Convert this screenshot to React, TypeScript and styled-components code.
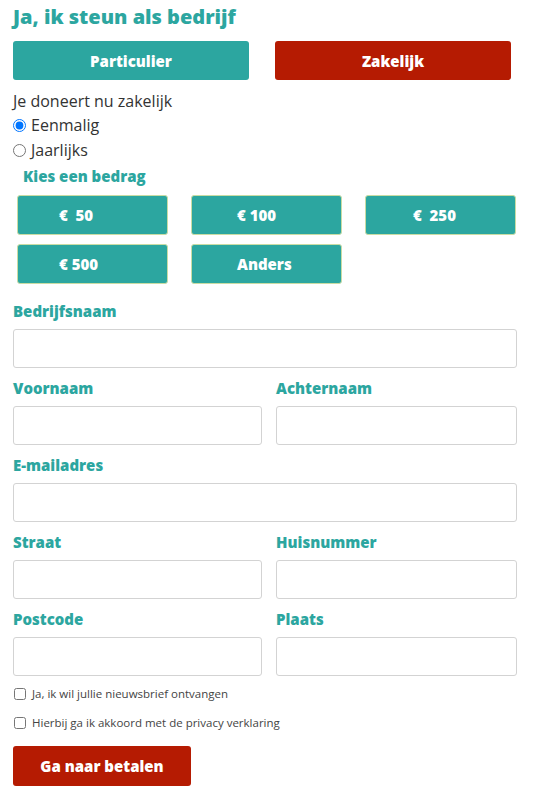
import styled, { createGlobalStyle } from "styled-components";
import { useState } from "react";

const GlobalStyle = createGlobalStyle`
  body {
    margin: 0;
    background: #ffffff;
    font-family: "Open Sans", "Liberation Sans", sans-serif;
    color: #333333;
  }
  * {
    box-sizing: border-box;
  }
`;

const teal = "#2ca6a0";
const red = "#b51b02";
const heading = `"Open Sans", Lato, sans-serif`;

const Page = styled.div`
  width: 535px;
  padding: 4px 18px 14px 13px;
`;

const Title = styled.h1`
  margin: 0;
  font-family: ${heading};
  font-weight: 800;
  font-size: 20px;
  line-height: 26px;
  color: ${teal};
`;

const TypeRow = styled.div`
  display: grid;
  grid-template-columns: 236px 236px;
  gap: 26px;
  margin-top: 11px;
`;

const BigButton = styled.button<{ $active?: boolean }>`
  height: 39px;
  border: none;
  border-radius: 3px;
  background: ${(p) => (p.$active ? red : teal)};
  color: #ffffff;
  font-family: ${heading};
  font-weight: 800;
  font-size: 15px;
  cursor: pointer;
`;

const Intro = styled.p`
  margin: 9px 0 0;
  font-size: 16px;
  line-height: 24px;
`;

const RadioRow = styled.label`
  display: flex;
  align-items: center;
  gap: 5px;
  font-size: 16px;
  line-height: 25px;
  input {
    margin: 0;
    width: 13px;
    height: 13px;
  }
`;

const SubTitle = styled.h2`
  margin: 2px 0 0 10px;
  font-family: ${heading};
  font-weight: 800;
  font-size: 15px;
  line-height: 22px;
  color: ${teal};
`;

const AmountGrid = styled.div`
  display: grid;
  grid-template-columns: repeat(3, 151px);
  column-gap: 23px;
  row-gap: 9px;
  margin: 8px 0 0 4px;
`;

const AmountButton = styled.button<{ $pad: number }>`
  height: 40px;
  border: 1px solid #c9dca4;
  border-radius: 3px;
  background: ${teal};
  color: #ffffff;
  text-align: left;
  padding: 0 0 0 ${(p) => p.$pad}px;
  font-family: ${heading};
  font-weight: 800;
  font-size: 15px;
  white-space: pre;
  cursor: pointer;
`;

const Form = styled.div`
  display: grid;
  grid-template-columns: 249px 1fr;
  column-gap: 14px;
  row-gap: 10px;
  margin-top: 17px;
`;

const Field = styled.div<{ $wide?: boolean }>`
  display: flex;
  flex-direction: column;
  grid-column: ${(p) => (p.$wide ? "1 / -1" : "auto")};
`;

const Label = styled.label`
  font-family: ${heading};
  font-weight: 800;
  font-size: 15px;
  line-height: 20px;
  color: ${teal};
  margin-bottom: 8px;
`;

const Input = styled.input`
  height: 39px;
  width: 100%;
  border: 1px solid #d3d3d3;
  border-radius: 3px;
  padding: 0 10px;
  font-size: 15px;
`;

const Checks = styled.div`
  display: flex;
  flex-direction: column;
  gap: 12px;
  margin-top: 9px;
`;

const CheckRow = styled.label`
  display: flex;
  align-items: center;
  gap: 6px;
  font-size: 11.5px;
  line-height: 17px;
  color: #444444;
  input {
    margin: 0 0 0 1px;
    width: 12px;
    height: 12px;
  }
`;

const Submit = styled.button`
  margin-top: 15px;
  width: 178px;
  height: 40px;
  border: none;
  border-radius: 3px;
  background: ${red};
  color: #ffffff;
  font-family: ${heading};
  font-weight: 800;
  font-size: 15px;
  cursor: pointer;
`;

const amounts = [
  { label: "€  50", pad: 41 },
  { label: "€ 100", pad: 45 },
  { label: "€  250", pad: 47 },
  { label: "€ 500", pad: 41 },
  { label: "Anders", pad: 45 },
];

const App = () => {
  const [freq, setFreq] = useState("once");

  return (
    <Page>
      <GlobalStyle />
      <Title>Ja, ik steun als bedrijf</Title>
      <TypeRow>
        <BigButton>Particulier</BigButton>
        <BigButton $active>Zakelijk</BigButton>
      </TypeRow>
      <Intro>Je doneert nu zakelijk</Intro>
      <RadioRow>
        <input
          type="radio"
          name="freq"
          checked={freq === "once"}
          onChange={() => setFreq("once")}
        />
        Eenmalig
      </RadioRow>
      <RadioRow>
        <input
          type="radio"
          name="freq"
          checked={freq === "year"}
          onChange={() => setFreq("year")}
        />
        Jaarlijks
      </RadioRow>
      <SubTitle>Kies een bedrag</SubTitle>
      <AmountGrid>
        {amounts.map((a) => (
          <AmountButton key={a.label} $pad={a.pad}>
            {a.label}
          </AmountButton>
        ))}
      </AmountGrid>
      <Form>
        <Field $wide>
          <Label>Bedrijfsnaam</Label>
          <Input />
        </Field>
        <Field>
          <Label>Voornaam</Label>
          <Input />
        </Field>
        <Field>
          <Label>Achternaam</Label>
          <Input />
        </Field>
        <Field $wide>
          <Label>E-mailadres</Label>
          <Input />
        </Field>
        <Field>
          <Label>Straat</Label>
          <Input />
        </Field>
        <Field>
          <Label>Huisnummer</Label>
          <Input />
        </Field>
        <Field>
          <Label>Postcode</Label>
          <Input />
        </Field>
        <Field>
          <Label>Plaats</Label>
          <Input />
        </Field>
      </Form>
      <Checks>
        <CheckRow>
          <input type="checkbox" />
          Ja, ik wil jullie nieuwsbrief ontvangen
        </CheckRow>
        <CheckRow>
          <input type="checkbox" />
          Hierbij ga ik akkoord met de privacy verklaring
        </CheckRow>
      </Checks>
      <Submit>Ga naar betalen</Submit>
    </Page>
  );
};

export default App;
